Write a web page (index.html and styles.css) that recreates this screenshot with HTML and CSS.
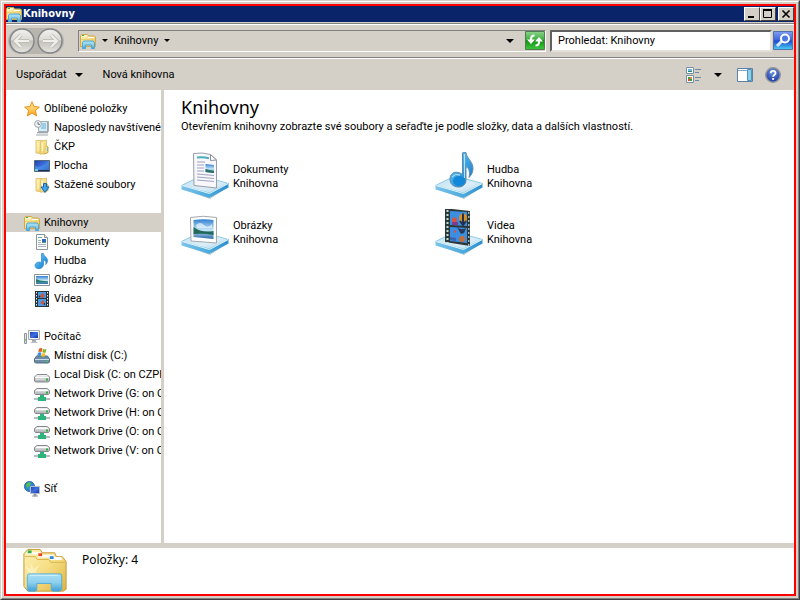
FILE: index.html
```html
<!DOCTYPE html>
<html lang="cs">
<head>
<meta charset="utf-8">
<title>Knihovny</title>
<link rel="stylesheet" href="styles.css">
</head>
<body>
<svg class="defs" aria-hidden="true">
  <defs>
    <linearGradient id="gold" x1="0" y1="0" x2="1" y2="1"><stop offset="0" stop-color="#fdf3b4"/><stop offset=".5" stop-color="#f5dd83"/><stop offset="1" stop-color="#dfb440"/></linearGradient>
    <linearGradient id="stand" x1="0" y1="0" x2="0" y2="1"><stop offset="0" stop-color="#a8e0f5"/><stop offset=".5" stop-color="#8fd0ee"/><stop offset="1" stop-color="#3f9fd4"/></linearGradient>
    <linearGradient id="orb" x1="0" y1="0" x2="0" y2="1"><stop offset="0" stop-color="#f2f1ee"/><stop offset=".45" stop-color="#dcdad5"/><stop offset=".5" stop-color="#c4c1ba"/><stop offset="1" stop-color="#e6e4e0"/></linearGradient>
    <linearGradient id="sky" x1="0" y1="0" x2="0" y2="1"><stop offset="0" stop-color="#2f7fd0"/><stop offset=".55" stop-color="#c8e8f8"/><stop offset="1" stop-color="#2a6aa8"/></linearGradient>
    <linearGradient id="trayTop" x1="0" y1="0" x2="1" y2="1"><stop offset="0" stop-color="#bfe2f3"/><stop offset=".6" stop-color="#dceef8"/><stop offset="1" stop-color="#a9d4ec"/></linearGradient>
    <linearGradient id="traySide" x1="0" y1="0" x2="1" y2="0"><stop offset="0" stop-color="#7cc4ea"/><stop offset=".6" stop-color="#4aa9dd"/><stop offset="1" stop-color="#2f8fce"/></linearGradient>
    <linearGradient id="note" x1="0" y1="0" x2="1" y2="1"><stop offset="0" stop-color="#8fd0f5"/><stop offset=".5" stop-color="#3fa4e4"/><stop offset="1" stop-color="#0f6fc4"/></linearGradient>
    <linearGradient id="screen" x1="0" y1="0" x2="1" y2="1"><stop offset="0" stop-color="#1c3fae"/><stop offset=".5" stop-color="#3f72e0"/><stop offset="1" stop-color="#1230a0"/></linearGradient>
    <linearGradient id="metal" x1="0" y1="0" x2="0" y2="1"><stop offset="0" stop-color="#fafafa"/><stop offset="1" stop-color="#a8acb0"/></linearGradient>
    <linearGradient id="green" x1="0" y1="0" x2="0" y2="1"><stop offset="0" stop-color="#8cd48c"/><stop offset=".45" stop-color="#3fae3f"/><stop offset=".5" stop-color="#129012"/><stop offset="1" stop-color="#3cc83c"/></linearGradient>
    <linearGradient id="blue" x1="0" y1="0" x2="0" y2="1"><stop offset="0" stop-color="#7f9df0"/><stop offset=".48" stop-color="#3c64dc"/><stop offset=".52" stop-color="#1a48cc"/><stop offset="1" stop-color="#4cd0f4"/></linearGradient>
    <linearGradient id="star" x1="0" y1="0" x2="0" y2="1"><stop offset="0" stop-color="#fff0a0"/><stop offset="1" stop-color="#f8a820"/></linearGradient>
    <radialGradient id="help" cx=".5" cy=".3" r=".7"><stop offset="0" stop-color="#6f94e4"/><stop offset="1" stop-color="#1838a0"/></radialGradient>
  </defs>
  <symbol id="i-library" viewBox="0 0 16 16">
    <path d="M.5 13.500V3L1.500 1.500h6L8.500 3h6l1 1V13.500z" fill="url(#gold)" stroke="#d0aa4c"/>
    <path d="M2 3h5M8 4.500h6" stroke="#fff"/><path d="M2 2.500h2" stroke="#37b24a"/><path d="M1 6.500h14" stroke="#ecd078"/>
    <path d="M2.500 15.500V9.500l1-1.500h9.500l1.500 1.500v6h-3V12h-6v3.500z" fill="url(#stand)" stroke="#4ea6d4"/>
  </symbol>
  <symbol id="i-star" viewBox="0 0 16 16">
    <path d="M8 .7l2.100 4.900 5.300.5-4 3.500 1.200 5.300L8 12.100l-4.600 2.800 1.200-5.300-4-3.500 5.300-.5z" fill="url(#star)" stroke="#e8901c" stroke-linejoin="round"/>
  </symbol>
  <symbol id="i-recent" viewBox="0 0 16 16">
    <path d="M4.500 1.500h10v10h-10z" fill="#d4ecf8" stroke="#a4acb4"/><path d="M8 4h4M8 6h4M7 8h5" stroke="#5cb0d8"/>
    <path d="M13.500 2v11M3 12.500h11M2 15h12" stroke="#a0a6ac"/><path d="M3 13.500h11" stroke="#dcdee0"/>
    <circle cx="4" cy="4" r="3.400" fill="#f2f4f6" stroke="#9ca4ac"/><path d="M4 2v2.300h2" fill="none" stroke="#687078"/>
  </symbol>
  <symbol id="i-folder" viewBox="0 0 16 16">
    <path d="M2 1.500h7l1 1V15L2 14z" fill="url(#gold)" stroke="#e0c478"/><path d="M6.500 2.500L12.500 1v12.500l-6 1.800z" fill="url(#gold)" stroke="#e0c478"/><path d="M12.500 7l1.500 1v5.500l-4 1.500" fill="#f5dc82" stroke="#c8a040"/><path d="M13.500 9v3" stroke="#6cb4e0"/><path d="M4 4v8M8.500 4v8" stroke="#fff6c4"/>
  </symbol>
  <symbol id="i-download" viewBox="0 0 16 16">
    <use href="#i-folder"/><path d="M9.500 6.500h3V10H15l-4 5.500L7 10h2.500z" fill="#42a6ec" stroke="#1468b8"/>
  </symbol>
  <symbol id="i-desktop" viewBox="0 0 16 16">
    <path d="M.5 2.500h15v11H.5z" fill="url(#screen)" stroke="#54687c"/><path d="M1 8Q7 11 15 3v9H1z" fill="#4e9ae8" opacity=".6"/><path d="M1 12.500h14" stroke="#1a2a48"/><path d="M1 12h3" stroke="#6cc8ee" stroke-width="2"/>
  </symbol>
  <symbol id="i-document" viewBox="0 0 16 16">
    <path d="M2.500.5h8l3 3v12h-11z" fill="#fff" stroke="#8c949c"/><path d="M10.500.5v3h3" fill="#e8eaee" stroke="#8c949c"/>
    <path d="M4 3.500h4" stroke="#60a8b8"/><path d="M4 6.500h3M4 8.500h3M4 10.500h8M4 12.500h8" stroke="#a8b0bc"/><path d="M8 5h4v4H8z" fill="#2868c0"/><path d="M8 8.500h4" stroke="#54a080"/>
  </symbol>
  <symbol id="i-music" viewBox="0 0 16 16">
    <path d="M7.500.5h2c0 3 4 3.500 4 7 0 1.800-.8 3-1.800 4 .8-2.800-.2-4-2.200-4.600V11c0 6-8.500 6-8.500 1.500 0-2.500 4-4.500 6.500-2.700z" fill="url(#note)" stroke="#2484cc" stroke-width=".7"/>
  </symbol>
  <symbol id="i-picture" viewBox="0 0 16 16">
    <path d="M.5 2.500h15v11H.5z" fill="#fff" stroke="#8c949c"/><path d="M2 4h12v8H2z" fill="url(#sky)"/><path d="M2 7l4 1.500 8 1v1H2z" fill="#237a6c"/>
  </symbol>
  <symbol id="i-video" viewBox="0 0 16 16">
    <path d="M1 0h14v16H1z" fill="#283038"/><path d="M4 1h8v6H4zM4 8h8v7H4z" fill="#4b9ae4"/><path d="M2.500 1v15M13.500 1v15" stroke="#e8f0f4" stroke-dasharray="1.500 1.500"/><path d="M7 3l2-1 2 3-2 2-3-1zM6 12l3-3 2 3-1 2z" fill="#c45848"/><path d="M5 5l1 1M10 13h1" stroke="#28384c" stroke-width="2"/>
  </symbol>
  <symbol id="i-computer" viewBox="0 0 16 16">
    <path d="M.5 4.500h2v10h-2z" fill="#e0e2e6" stroke="#90969e"/><path d="M1 11h1" stroke="#3cb43c"/><path d="M4.500 1.500h11v9h-11z" fill="#f4f4f8" stroke="#a4a8b4"/><path d="M6 3h8v6H6z" fill="url(#screen)"/><path d="M8 11h4v2H8z" fill="#a8acb4"/><path d="M6.500 13.500h7" stroke="#c0c2c8"/>
  </symbol>
  <symbol id="i-drive" viewBox="0 0 16 16">
    <path d="M3 7.500h10l2.500 2.500v4l-1 1h-13l-1-1v-4z" fill="url(#metal)" stroke="#85898d"/><path d="M1 10.500h14" stroke="#fff"/><path d="M2 12.500h9" stroke="#d4d7da"/><path d="M12 12.500h2" stroke="#28b040" stroke-width="2"/>
  </symbol>
  <symbol id="i-system" viewBox="0 0 16 16">
    <path d="M2.500 8h11l2 3v3l-1 1h-13l-1-1v-3z" fill="#6c8ca4" stroke="#546c80"/><path d="M1 11.500h14" stroke="#c4dce8"/><path d="M12 13.500h2" stroke="#40d060"/>
    <path d="M5 .8q2-1.300 3.500-.2L7.700 4Q6 3.300 4.300 4z" fill="#ec5c24"/><path d="M9 1q2 .8 3.500 0L11.700 4.400q-1.700.6-3.400-.2z" fill="#7cb82c"/><path d="M4 4.700q1.700-.8 3.400 0L6.600 8Q5 7.300 3.200 8z" fill="#3c8cdc"/><path d="M8 5q1.700.7 3.400 0L10.700 8.300Q9 9 7.200 8.300z" fill="#f8c024"/>
  </symbol>
  <symbol id="i-netdrive" viewBox="0 0 16 16">
    <path d="M3 2.500h10l2.500 2v3l-1 1h-13l-1-1v-3z" fill="url(#metal)" stroke="#85898d"/><path d="M2 4.500h12" stroke="#fff"/><path d="M12 6.500h2" stroke="#28b040" stroke-width="2"/>
    <path d="M0 13h16" stroke="#b4bcc0" stroke-width="2"/><path d="M6 9h4v2h2v4H4v-4h2z" fill="#2cb47c"/>
  </symbol>
  <symbol id="i-network" viewBox="0 0 16 16">
    <circle cx="5.500" cy="5.500" r="5" fill="#2c88d8" stroke="#2468a8"/><path d="M2 3l3-2 2 1-1 3-3 2zM6 6l3 1-2 3-2-2z" fill="#58bc4c"/>
    <path d="M6.500 5.500h9v7h-9z" fill="url(#screen)" stroke="#b4bcd0"/><path d="M10 13h2v2h-2zM8 15h6" fill="#888" stroke="#989ca4"/>
  </symbol>
  <symbol id="tray" viewBox="0 0 48 48">
    <path d="M2 37l27 9 18-11-18 12z" fill="#b8c4cc"/><path d="M.5 33.500L20 24l27.500 7.500-19 9.500z" fill="url(#trayTop)" stroke="#8ccae8"/><path d="M.5 33.500L28.500 41 47.500 31.500v4L28.500 46 .5 37.500z" fill="url(#traySide)"/><path d="M1 33.500l27.500 8L47 31.700" fill="none" stroke="#e2f4fc"/>
  </symbol>
  <symbol id="l-document" viewBox="0 0 48 48">
    <use href="#tray"/><path d="M12.500 1.500q9-1.500 17 1l6 5.500V36L13 33.500z" fill="#f7f7fc" stroke="#9a9ea8"/><path d="M29.500 2.500v6l6-.5z" fill="#fff" stroke="#8c9098"/>
    <path d="M16 5.500q6-1 12 .7" fill="none" stroke="#4caeb4" stroke-width="2"/>
    <path d="M16 10h8M16 13h7M16 16h7M16 19h7M16 22l17 1.500M16 25l17 1.500M16 28l17 1.500" stroke="#a0a4c0" fill="none"/><path d="M24.500 12l8.500 1v8l-8.500-1z" fill="url(#sky)"/><path d="M24.500 17l8.500 2v2l-8.500-1z" fill="#257068"/>
  </symbol>
  <symbol id="l-music" viewBox="0 0 48 48">
    <use href="#tray"/><path d="M27.500.8l3.500-.3c0 5 7 9 7 16 0 4-2 7-4 9 1-5 .5-9-3-11V28c0 10-16 9-16-.500 0-8 7-9 12.500-5z" fill="url(#note)" stroke="#5c8cac"/><path d="M29.500 2v24" stroke="#b4e4fa"/><ellipse cx="24" cy="29" rx="6" ry="5" fill="#1488d8"/><path d="M17 25q3-4 8-2" fill="none" stroke="#c0e8fa"/>
  </symbol>
  <symbol id="l-picture" viewBox="0 0 48 48">
    <use href="#tray"/><path d="M9.500 9.500q13-2.500 26 0V35L10 33z" fill="#fff" stroke="#a4a6aa"/><path d="M12.500 12q10-1.500 20 0v19l-20-2z" fill="url(#sky)"/><path d="M12.500 19q8 6 20 4v4q-10-2-20-1z" fill="#246a5c"/><path d="M15 17q4-4 8 0t8-1v4H16z" fill="#ecf6fc" opacity=".7"/>
  </symbol>
  <symbol id="l-video" viewBox="0 0 48 48">
    <use href="#tray"/><path d="M10 1h7l18 2v35l-25-4z" fill="#2c3838"/><path d="M15 3l17 1v14l-17-1zM15 19l17 1v15l-17-2z" fill="#3c8ee0"/>
    <path d="M12.500 2v33" stroke="#c0e0dc" stroke-width="2" stroke-dasharray="2 2"/><path d="M33.800 4v34" stroke="#d4e4e4" stroke-dasharray="2 2"/>
    <path d="M17 11l2-2 3 2-1 4h-4z" fill="#e05038"/><path d="M17 14h6v3h-6z" fill="#7c3c90"/><ellipse cx="28" cy="10" rx="4" ry="4.500" fill="#d89020"/><path d="M28 5.500v10M25 13l3 4 3-4" stroke="#243050" stroke-width="2" fill="none"/><path d="M22 19q4 4 9 1l-2 5-3 1z" fill="#283858"/><path d="M19 22l2 1v2l-2-1z" fill="#e84438"/><ellipse cx="27" cy="31" rx="3" ry="3" fill="#c46c38"/><path d="M15 29l6 1v3l-6-1z" fill="#3c64b4"/>
  </symbol>
  <symbol id="l-library" viewBox="0 0 48 48">
    <path d="M2 40V6l4-4.500h13L21 5h13l2 4h6l4 5v29l-3 2H6z" fill="url(#gold)" stroke="#c49a38"/>
    <path d="M6 4.500h13l1 2H6zM16 7h17l1 3H17zM28 9.500h13l1 3H29z" fill="#fff"/><path d="M6 4h4" stroke="#35ae48" stroke-width="3"/><path d="M17 7h4" stroke="#e84820" stroke-width="3"/><path d="M29 10h4" stroke="#3488d8" stroke-width="3"/>
    <path d="M3 9h11l2 3h12l2 3h15" stroke="#d8b450" fill="none"/><path d="M9 14l3 8 7-5-5 8 9 4-10-1-1 8-3-8-6 3 4-6-4-6 6 3z" fill="#fffbe0" opacity=".5"/>
    <path d="M5.500 43V29q0-2 2-2h32q2 0 2 2v14q-1 2-3 2h-6q-2 0-2-2v-6h-15v6q0 2-2 2h-6q-2 0-2-2z" fill="url(#stand)" stroke="#54aed8"/><path d="M8 28.500h30" stroke="#d4f2fc"/>
  </symbol>
</svg>

<div class="window">
<div class="frame">
  <header class="titlebar">
    <svg class="icon"><use href="#i-library"/></svg>
    <h1>Knihovny</h1>
    <button class="caption" aria-label="Minimalizovat"><svg viewBox="0 0 12 10"><path d="M2 8h6" stroke="#000" stroke-width="2"/></svg></button>
    <button class="caption" aria-label="Maximalizovat"><svg viewBox="0 0 12 10"><path d="M1.500 1.500h8v7h-8z" fill="none" stroke="#000"/><path d="M1 1h9" stroke="#000" stroke-width="2"/></svg></button>
    <button class="caption close" aria-label="Zavřít"><svg viewBox="0 0 12 10"><path d="M2.500 1.500l7 7M9.500 1.500l-7 7" stroke="#000" stroke-width="1.600"/></svg></button>
  </header>

  <div class="navbar">
    <div class="history">
      <button aria-label="Zpět"><svg viewBox="0 0 26 26"><circle cx="13" cy="13" r="12" fill="url(#orb)" stroke="#85878a" stroke-width="1.500"/><path d="M12 7l-6 6 6 6M7 13h13" fill="none" stroke="#c2bfb8" stroke-width="4"/><path d="M12 7l-6 6 6 6M7 13h13" fill="none" stroke="#f0efec" stroke-width="2"/></svg></button>
      <button aria-label="Vpřed"><svg viewBox="0 0 26 26"><circle cx="13" cy="13" r="12" fill="url(#orb)" stroke="#85878a" stroke-width="1.500"/><path d="M14 7l6 6-6 6M19 13H6" fill="none" stroke="#c2bfb8" stroke-width="4"/><path d="M14 7l6 6-6 6M19 13H6" fill="none" stroke="#f0efec" stroke-width="2"/></svg></button>
    </div>
    <div class="address">
      <svg class="icon"><use href="#i-library"/></svg>
      <button class="drop" aria-label="Umístění"><i class="arrow small"></i></button>
      <a href="#" class="crumb">Knihovny</a>
      <button class="drop" aria-label="Podsložky"><i class="arrow small"></i></button>
      <button class="drop last" aria-label="Předchozí umístění"><i class="arrow"></i></button>
      <button class="square" aria-label="Aktualizovat"><svg viewBox="0 0 20 19"><path d="M.5.5h19v18H.5z" fill="url(#green)" stroke="#4f7c50"/><path d="M9.500 4.500Q6 4.500 6 8v2" fill="none" stroke="#fff" stroke-width="2"/><path d="M2 8.500h8L6 13z" fill="#fff"/><path d="M10.500 14.500Q14 14.500 14 11V9" fill="none" stroke="#fff" stroke-width="2"/><path d="M10 10.500h8L14 6z" fill="#fff"/></svg></button>
    </div>
    <form class="search">
      <input type="text" aria-label="Hledat" placeholder="Prohledat: Knihovny">
      <button type="button" class="square" aria-label="Hledat"><svg viewBox="0 0 20 19"><path d="M.5.5h19v18H.5z" fill="url(#blue)" stroke="#5470a8"/><path d="M9 10l-5 5" stroke="#dce8fc" stroke-width="3"/><circle cx="12" cy="7.500" r="4" fill="#4c78e4" stroke="#fff" stroke-width="2"/></svg></button>
    </form>
  </div>

  <div class="toolbar">
    <button>Uspořádat<i class="arrow"></i></button>
    <button>Nová knihovna</button>
    <button class="views" aria-label="Zobrazení"><svg class="icon" viewBox="0 0 16 16"><path d="M.5.5h7v6h-7zM.5 8.500h7v7h-7z" fill="#fff" stroke="#7890a4"/><path d="M2 4h4v1H2z" fill="#288878"/><path d="M2 2h4v2H2z" fill="#68b8e8"/><path d="M2 10h2v2H2zM4 12h2v2H4z" fill="#34a840"/><path d="M4 10h2v2H4z" fill="#e88030"/><path d="M2 12h2v2H2z" fill="#d84c38"/><path d="M9 2.500h6M9 5.500h4M9 10.500h6M9 13.500h4" stroke="#6c88a4"/></svg></button>
    <button class="more" aria-label="Další možnosti"><i class="arrow"></i></button>
    <button class="pane" aria-label="Podokno náhledu"><svg class="icon" viewBox="0 0 16 16"><path d="M.5 1.500h15v13H.5z" fill="#fff" stroke="#5c80a8"/><path d="M1 3.500h14" stroke="#88a8c8"/><path d="M10.500 2.500h4v11h-4z" fill="#8cd0e8" stroke="#4c98bc"/></svg></button>
    <button class="help" aria-label="Nápověda"><svg class="icon" viewBox="0 0 16 16"><circle cx="8" cy="8" r="7.200" fill="url(#help)" stroke="#8c9098" stroke-width="1.500"/><path d="M5.700 6.200c0-3 4.800-3 4.800 0C10.500 8 8.100 7.800 8.100 9.800" fill="none" stroke="#fff" stroke-width="1.800"/><circle cx="8.100" cy="12" r="1.100" fill="#fff"/></svg></button>
  </div>

  <div class="body">
    <nav class="sidebar">
      <ul>
        <li class="top"><svg class="icon"><use href="#i-star"/></svg><a href="#">Oblíbené položky</a></li>
        <li><svg class="icon"><use href="#i-recent"/></svg><a href="#">Naposledy navštívené</a></li>
        <li><svg class="icon"><use href="#i-folder"/></svg><a href="#">ČKP</a></li>
        <li><svg class="icon"><use href="#i-desktop"/></svg><a href="#">Plocha</a></li>
        <li><svg class="icon"><use href="#i-download"/></svg><a href="#">Stažené soubory</a></li>
      </ul>
      <ul>
        <li class="top selected"><svg class="icon"><use href="#i-library"/></svg><a href="#">Knihovny</a></li>
        <li><svg class="icon"><use href="#i-document"/></svg><a href="#">Dokumenty</a></li>
        <li><svg class="icon"><use href="#i-music"/></svg><a href="#">Hudba</a></li>
        <li><svg class="icon"><use href="#i-picture"/></svg><a href="#">Obrázky</a></li>
        <li><svg class="icon"><use href="#i-video"/></svg><a href="#">Videa</a></li>
      </ul>
      <ul>
        <li class="top"><svg class="icon"><use href="#i-computer"/></svg><a href="#">Počítač</a></li>
        <li><svg class="icon"><use href="#i-system"/></svg><a href="#">Místní disk (C:)</a></li>
        <li><svg class="icon"><use href="#i-drive"/></svg><a href="#">Local Disk (C: on CZPH</a></li>
        <li><svg class="icon"><use href="#i-netdrive"/></svg><a href="#">Network Drive (G: on C</a></li>
        <li><svg class="icon"><use href="#i-netdrive"/></svg><a href="#">Network Drive (H: on C</a></li>
        <li><svg class="icon"><use href="#i-netdrive"/></svg><a href="#">Network Drive (O: on C</a></li>
        <li><svg class="icon"><use href="#i-netdrive"/></svg><a href="#">Network Drive (V: on C</a></li>
      </ul>
      <ul>
        <li class="top"><svg class="icon"><use href="#i-network"/></svg><a href="#">Síť</a></li>
      </ul>
    </nav>
    <main>
      <h2>Knihovny</h2>
      <p>Otevřením knihovny zobrazte své soubory a seřaďte je podle složky, data a dalších vlastností.</p>
      <div class="libraries">
        <a href="#"><svg><use href="#l-document"/></svg><span>Dokumenty<br>Knihovna</span></a>
        <a href="#"><svg><use href="#l-music"/></svg><span>Hudba<br>Knihovna</span></a>
        <a href="#"><svg><use href="#l-picture"/></svg><span>Obrázky<br>Knihovna</span></a>
        <a href="#"><svg><use href="#l-video"/></svg><span>Videa<br>Knihovna</span></a>
      </div>
    </main>
  </div>

  <footer class="details">
    <svg><use href="#l-library"/></svg>
    <span>Položky: 4</span>
  </footer>
</div>
</div>
</body>
</html>
```

FILE: styles.css
```css
* { box-sizing: border-box; }

body {
  margin: 0;
  height: 100vh;
  font: 11px/14px Roboto, "DejaVu Sans", sans-serif;
  color: #000;
}

a { color: inherit; text-decoration: none; }
h1, h2, p, ul { margin: 0; padding: 0; }
ul { list-style: none; }

button {
  display: flex;
  align-items: center;
  justify-content: center;
  flex: none;
  padding: 0;
  border: 0;
  background: none;
  font: inherit;
  color: inherit;
}

svg { display: block; flex: none; }
.defs { position: absolute; width: 0; height: 0; }
.icon { width: 16px; height: 16px; }

.arrow {
  border: 4px solid transparent;
  border-top-color: #000;
  border-bottom: 0;
}
.arrow.small { border-width: 3px 3px 0; }

/* Window frame */
.window {
  height: 100%;
  border: 1px solid;
  border-color: #d4d0c8 #404040 #404040 #d4d0c8;
}
.frame {
  height: 100%;
  display: flex;
  flex-direction: column;
  border: 1px solid;
  border-color: #fff #808080 #808080 #fff;
  padding: 4px;
  background: #d4d0c8;
  outline: 2px solid #f00;
  outline-offset: -5px;
}

.titlebar {
  display: flex;
  align-items: center;
  height: 16px;
  background: #0a246a;
  color: #fff;
}
.titlebar h1 {
  flex: 1;
  margin-left: 1px;
  font: bold 11px/14px "DejaVu Sans Condensed", "DejaVu Sans", sans-serif;
}
.caption {
  width: 16px;
  height: 14px;
  background: #d4d0c8;
  border: 1px solid;
  border-color: #fff #404040 #404040 #fff;
}
.caption svg { width: 12px; height: 10px; }
.caption.close { margin-left: 2px; }

.navbar {
  display: flex;
  align-items: center;
  height: 35px;
  margin-top: 1px;
  padding: 0 1px 0 2px;
  border-top: 1px solid #808080;
  border-bottom: 1px solid #808080;
  box-shadow: inset 0 1px #fff, 0 1px #fff;
}
.history {
  display: flex;
  gap: 2px;
  margin-right: 14px;
  padding: 0 1px;
  border-radius: 13px;
  background: #b8b5ae;
}
.history svg { width: 26px; height: 26px; }

.address {
  display: flex;
  align-items: center;
  flex: 1;
  height: 22px;
  border: 1px solid;
  border-color: #808080 #fff #fff #808080;
}
.address .icon { margin-left: 1px; }
.drop { width: 18px; height: 18px; }
.drop.last { margin-left: auto; }
.square { margin-left: 6px; }
.square svg { width: 20px; height: 19px; }

.search { display: flex; align-items: center; width: 243px; margin-left: 4px; }
.search input {
  flex: 1;
  min-width: 0;
  height: 22px;
  padding: 0 6px;
  border: 2px solid;
  border-color: #606060 #e4e1da #e4e1da #606060;
  background: #fff;
  font: inherit;
}
.search input::placeholder { color: #000; opacity: 1; }
.search .square { margin-left: 1px; }

.toolbar {
  display: flex;
  align-items: center;
  height: 31px;
  margin-top: 1px;
  padding: 0 13px 0 10px;
  gap: 20px;
}
.toolbar button .arrow { margin-left: 8px; }
.toolbar .views { margin-left: auto; }
.toolbar .more { margin-left: -16px; }
.toolbar .pane { margin-left: -5px; }
.toolbar .help { margin-left: -8px; }

.body { display: flex; flex: 1; min-height: 0; background: #fff; }

.sidebar {
  width: 158px;
  padding-top: 9px;
  border-right: 3px solid #d4d0c8;
  overflow: hidden;
}
.sidebar ul + ul { margin-top: 19px; }
.sidebar li {
  display: flex;
  align-items: center;
  gap: 4px;
  height: 19px;
  padding-left: 28px;
  white-space: nowrap;
}
.sidebar li.top { padding-left: 18px; }
.sidebar .selected { background: #d4d0c8; }

main { flex: 1; padding: 5px 0 0 17px; }
main h2 {
  font: 18px/25px "Noto Sans", sans-serif;
}
.libraries {
  display: grid;
  grid-template-columns: repeat(auto-fill, 254px);
  gap: 8px 0;
  margin-top: 18px;
}
.libraries a { display: flex; align-items: center; gap: 4px; }
.libraries svg { width: 48px; height: 48px; }
.libraries span { padding-top: 2px; }

.details {
  display: flex;
  height: 51px;
  padding-left: 15px;
  gap: 13px;
  border-top: 5px solid #d4d0c8;
  background: #fff;
}
.details svg { width: 48px; height: 46px; }
.details span { margin-top: 5px; font: 12px/14px "Noto Sans", sans-serif; }
```
